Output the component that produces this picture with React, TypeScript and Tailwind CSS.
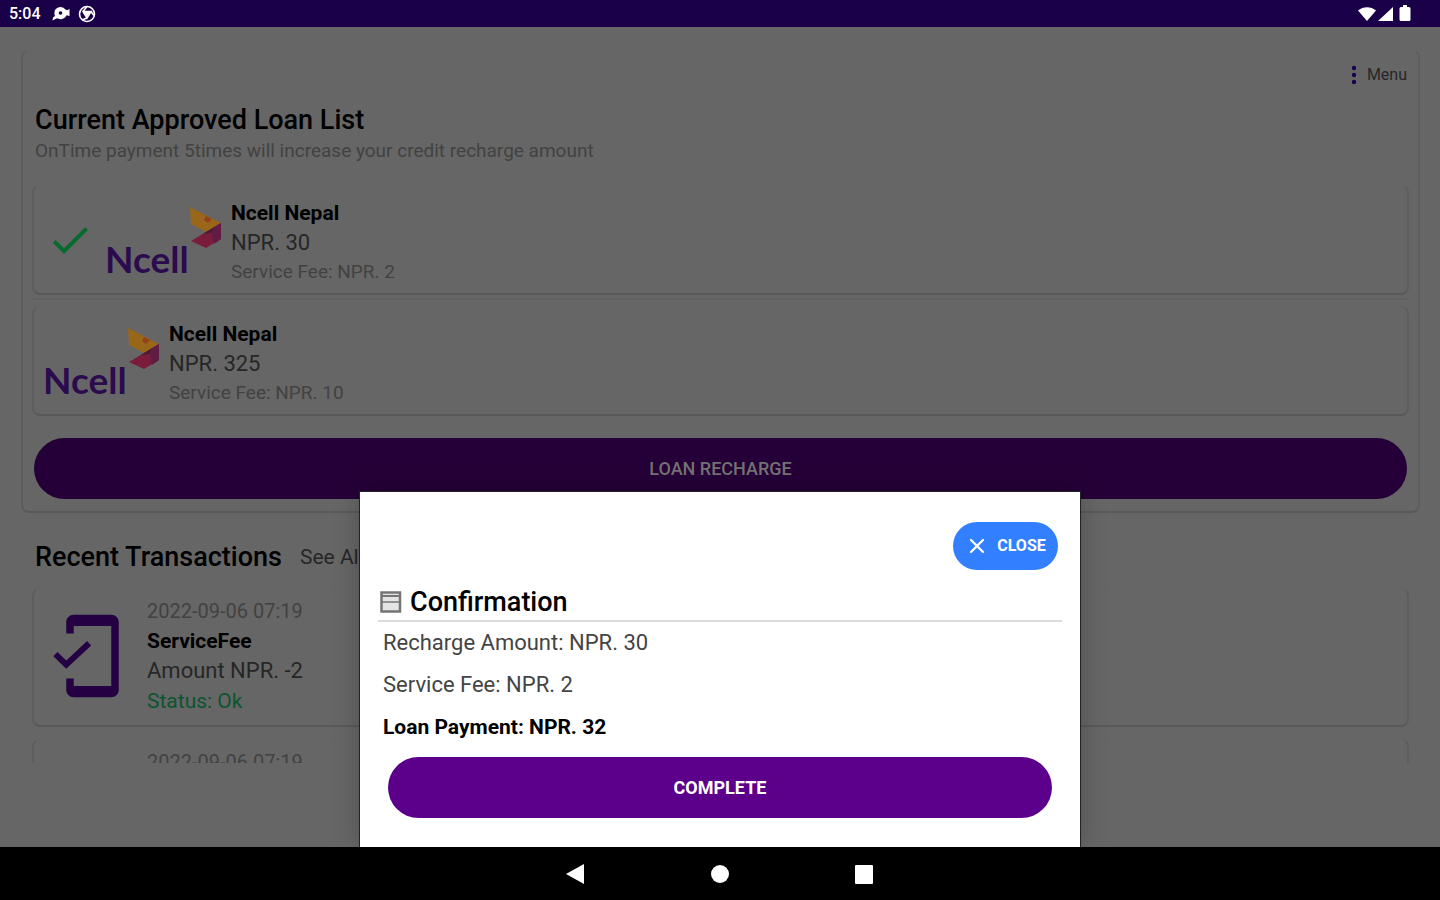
import { useState } from "react";
import { X } from "lucide-react";

type Loan = { id: number; name: string; amount: string; fee: string };

const LOANS: Loan[] = [
  { id: 1, name: "Ncell Nepal", amount: "NPR. 30", fee: "Service Fee: NPR. 2" },
  { id: 2, name: "Ncell Nepal", amount: "NPR. 325", fee: "Service Fee: NPR. 10" },
];

const TRANSACTIONS = [
  { id: 1, date: "2022-09-06 07:19", type: "ServiceFee", amount: "Amount NPR. -2", status: "Status: Ok" },
  { id: 2, date: "2022-09-06 07:19", type: "Recharge", amount: "Amount NPR. 30", status: "Status: Ok" },
];

const CARD = "rounded-lg border-x-2 border-b-2 border-t border-x-[#5d5d5d] border-b-[#595959] border-t-[#646464]";

function StatusBar() {
  return (
    <header className="flex h-[27px] shrink-0 items-center justify-between bg-[#190048] pl-[9px] pr-[29px] text-white">
      <div className="flex items-center gap-[10px]">
        <span className="text-base font-medium leading-6">5:04</span>
        <svg className="h-4 w-5" viewBox="0 0 20 16" fill="currentColor">
          <path d="M3.500 6a6 5.500 0 0 1 11-2.500l1.500.8 2.500-1.300v7l-3-.7a6 5.500 0 0 1-8 3.400l-1.500-.5L1.500 14.500l.5-3 2-1.500A6 6 0 0 1 3.500 6z" />
          <circle cx="9.500" cy="7" r="1.800" fill="#190048" />
        </svg>
        <svg className="-ml-[3px] h-[18px] w-[18px]" viewBox="0 0 18 18" fill="none" stroke="currentColor" strokeWidth="1.600">
          <circle cx="9" cy="9" r="7.500" />
          <path d="M5 6.500h8L9 13zM9 1.500 5 6.500M13 6.500l3 4M9 13l-5 2" />
          <path d="M7 7.500h4L9 10.500z" fill="currentColor" />
        </svg>
      </div>
      <div className="flex items-center gap-[2px]">
        <svg className="h-[18px] w-[18px]" viewBox="0 0 18 18" fill="currentColor">
          <path d="M0 5.500C5 1 13 1 18 5.500L9 16z" />
        </svg>
        <svg className="h-[18px] w-4" viewBox="0 0 16 18" fill="currentColor">
          <path d="M15 2v14H0z" />
        </svg>
        <svg className="ml-[3px] h-[18px] w-3" viewBox="0 0 12 18" fill="currentColor">
          <path d="M4 0h4v2h2a1.500 1.500 0 0 1 1.500 1.500v11A1.500 1.500 0 0 1 10 16H2A1.500 1.500 0 0 1 .5 14.500v-11A1.500 1.500 0 0 1 2 2h2z" />
        </svg>
      </div>
    </header>
  );
}

function NcellLogo() {
  return (
    <svg className="h-[84px] w-[118px] shrink-0" viewBox="0 0 118 84">
      <text x="0" y="75" fill="#2b0a4d" fontFamily="Lato, sans-serif" fontWeight="700" fontSize="37">
        Ncell
      </text>
      <path d="M85 9l31 16-15 9-15-8z" fill="#99661a" />
      <path d="M101 18l6 3-4 4-4-3z" fill="#93431c" />
      <path d="M116 25v16l-15 9-15-7 15-9z" fill="#7a1c3c" />
      <path d="M116 25v16l-7 5-3-15z" fill="#611c46" />
      <path d="M108 30l-2 5-8 1 3-2z" fill="#4a1a33" />
    </svg>
  );
}

function LoanCard({ loan, selected }: { loan: Loan; selected: boolean }) {
  return (
    <div className={`flex h-[110px] items-center pl-[9px] pt-px ${CARD}`}>
      {selected && (
        <span className="w-[62px] shrink-0 pl-[3px]">
          <svg className="h-12 w-12" viewBox="0 0 24 24" fill="#056b2f">
            <path d="M9 16.170 4.830 12l-1.420 1.410L9 19 21 7l-1.410-1.410z" />
          </svg>
        </span>
      )}
      <NcellLogo />
      <div className="ml-2 pt-1">
        <h2 className="text-[21px] font-bold leading-[29px] text-black">{loan.name}</h2>
        <p className="text-[22px] leading-[29px] text-[#262626]">{loan.amount}</p>
        <p className="text-[19px] leading-[29px] text-[#424242]">{loan.fee}</p>
      </div>
    </div>
  );
}

function PhoneCheck() {
  return (
    <svg className="mt-[22px] h-[90px] w-[90px] shrink-0" viewBox="0 0 24 24" fill="#250043">
      <path d="M19 1H9c-1.100 0-2 .9-2 2v3h2V4h10v16H9v-2H7v3c0 1.100.9 2 2 2h10c1.100 0 2-.9 2-2V3c0-1.100-.9-2-2-2z" />
      <path d="M4.100 11.500 7 14.300l6.100-5.700" fill="none" stroke="#250043" strokeWidth="1.600" />
    </svg>
  );
}

function ConfirmSheet({ onClose }: { onClose: () => void }) {
  return (
    <div
      role="dialog"
      aria-labelledby="confirm-title"
      className="absolute inset-x-0 bottom-0 mx-auto flex w-1/2 flex-col bg-white px-[18px] pb-[29px] pt-[30px] shadow-[0_0_0_1px_#222222,0_0_24px_rgba(0,0,0,0.25)]"
    >
      <button
        type="button"
        onClick={onClose}
        className="mr-1 flex h-12 w-[105px] items-center justify-center gap-2 self-end rounded-full bg-[#3280ff] text-base font-bold text-white"
      >
        <X className="h-6 w-6" strokeWidth={2.25} />
        CLOSE
      </button>
      <div className="mt-[14px] flex h-[38px] items-center gap-2 border-b-2 border-[#dcdcdc] pl-[2px]">
        <svg className="h-[22px] w-[22px]" viewBox="0 0 22 22" fill="none" stroke="#757575" strokeWidth="2.500">
          <rect x="1.500" y="1.500" width="18.500" height="19" fill="#e4e4e4" />
          <path d="M1 5h20" strokeWidth="2" />
          <path d="M1 11h20" strokeWidth="1.500" />
        </svg>
        <h2 id="confirm-title" className="text-[27px] font-medium leading-8 text-black">
          Confirmation
        </h2>
      </div>
      <div className="pl-[5px] text-[22px] leading-[42px] text-[#444444]">
        <p>Recharge Amount: NPR. 30</p>
        <p>Service Fee: NPR. 2</p>
        <p className="text-[21px] font-bold leading-[42px] text-black">Loan Payment: NPR. 32</p>
      </div>
      <button
        type="button"
        onClick={onClose}
        className="mx-[10px] mt-[9px] h-[61px] rounded-full bg-[#5c008c] text-lg font-bold text-white"
      >
        COMPLETE
      </button>
    </div>
  );
}

function NavBar() {
  return (
    <nav className="flex h-[53px] shrink-0 items-center justify-center gap-[120px] bg-black text-white">
      <button type="button" aria-label="Back">
        <svg className="h-6 w-6" viewBox="0 0 24 24" fill="currentColor">
          <path d="M20 2v20L2 12z" />
        </svg>
      </button>
      <button type="button" aria-label="Home">
        <svg className="h-6 w-6" viewBox="0 0 24 24" fill="currentColor">
          <circle cx="12" cy="12" r="9" />
        </svg>
      </button>
      <button type="button" aria-label="Recent apps">
        <svg className="h-6 w-6" viewBox="0 0 24 24" fill="currentColor">
          <rect x="3" y="3" width="18" height="19" rx="1" />
        </svg>
      </button>
    </nav>
  );
}

export default function App() {
  const [open, setOpen] = useState(true);
  const [selectedId] = useState(1);

  return (
    <div className="flex h-screen flex-col bg-[#666666] font-[Roboto,sans-serif]">
      <StatusBar />
      <div className="relative flex-1 overflow-hidden">
        <main className="pl-[21px] pr-5 pt-[23px]">
          <section className={`px-[9px] pb-3 pt-3 ${CARD}`}>
            <div className="flex justify-end pr-[2px]">
              <button type="button" className="flex items-center gap-[10px] text-base leading-6 text-[#262626]">
                <svg className="h-5 w-[6px]" viewBox="0 0 6 20" fill="#1a0050">
                  <circle cx="3" cy="3" r="2.200" />
                  <circle cx="3" cy="10" r="2.200" />
                  <circle cx="3" cy="17" r="2.200" />
                </svg>
                Menu
              </button>
            </div>
            <h1 className="mt-[17px] pl-[3px] text-[27px] font-medium leading-8 text-black">
              Current Approved Loan List
            </h1>
            <p className="mt-[3px] pl-[3px] text-[19px] leading-6 text-[#424242]">
              OnTime payment 5times will increase your credit recharge amount
            </p>
            <ul className="mt-[22px] flex flex-col gap-[6px]">
              {LOANS.map((loan) => (
                <li key={loan.id} className="border-b-2 border-[#616161] pb-[3px] last:border-b-0 last:pb-0">
                  <LoanCard loan={loan} selected={loan.id === selectedId} />
                </li>
              ))}
            </ul>
            <div className="mt-[22px] px-[2px]">
              <button
                type="button"
                onClick={() => setOpen(true)}
                className="h-[61px] w-full rounded-full bg-[#250038] text-lg font-medium text-[#737373]"
              >
                LOAN RECHARGE
              </button>
            </div>
          </section>

          <section className="px-[11px]">
            <div className="mt-7 flex items-center gap-[18px] pl-[3px]">
              <h2 className="text-[27px] font-medium leading-8 text-black">Recent Transactions</h2>
              <a href="#transactions" className="text-[21px] leading-8 text-[#262626]">
                See All
              </a>
            </div>
            <ul id="transactions" className="mt-[15px] flex max-h-[175px] flex-col gap-3 overflow-hidden">
              {TRANSACTIONS.map((t) => (
                <li key={t.id} className={`flex h-[139px] shrink-0 pl-[6px] ${CARD}`}>
                  <PhoneCheck />
                  <div className="ml-[17px] pt-[7px]">
                    <p className="text-xl leading-[30px] text-[#424242]">{t.date}</p>
                    <h3 className="text-[21px] font-bold leading-[30px] text-black">{t.type}</h3>
                    <p className="text-[22px] leading-[30px] text-[#262626]">{t.amount}</p>
                    <p className="text-[21px] leading-[30px] text-[#0b5530]">{t.status}</p>
                  </div>
                </li>
              ))}
            </ul>
          </section>
        </main>
        {open && <ConfirmSheet onClose={() => setOpen(false)} />}
      </div>
      <NavBar />
    </div>
  );
}
